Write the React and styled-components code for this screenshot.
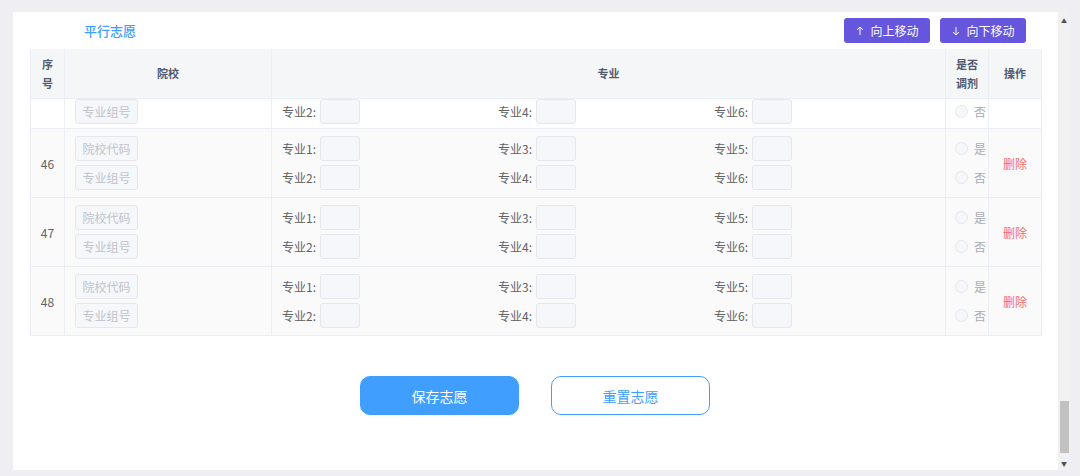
import React from 'react';
import styled, { createGlobalStyle } from 'styled-components';

const Global = createGlobalStyle`
  html, body { margin: 0; padding: 0; background: #efeef3; }
  body { font-family: "Noto Sans CJK SC", "Noto Sans", sans-serif; font-size: 12px; color: #606266; }
`;

const Page = styled.div`
  display: flex;
  height: 476px;
  padding: 12px 10px 6px 13px;
  box-sizing: border-box;
`;

const Panel = styled.div`
  flex: 1;
  background: #fff;
  padding: 0 16px 0 17px;
  display: flex;
  flex-direction: column;
`;

const Scrollbar = styled.div`
  width: 14px;
  background: #f1f1f1;
  display: flex;
  flex-direction: column;
  justify-content: space-between;
  align-items: center;
  padding: 4px 0 2px;
  box-sizing: border-box;
  font-size: 6px;
  color: #505050;
`;

const Thumb = styled.div`
  width: 9px;
  height: 52px;
  background: #c1c1c1;
  margin-top: auto;
  margin-bottom: 6px;
`;

const TopBar = styled.div`
  height: 37px;
  margin-left: 3px;
  display: flex;
  align-items: center;
  justify-content: space-between;
  padding: 0 16px 0 51px;
`;

const Title = styled.div`
  color: #409eff;
  font-size: 13px;
  font-weight: 500;
`;

const MoveButtons = styled.div`
  display: flex;
  gap: 10px;
`;

const MoveButton = styled.button`
  width: 86px;
  height: 25px;
  border: none;
  border-radius: 3px;
  background: #6655dd;
  color: #fff;
  font-family: inherit;
  font-size: 12px;
  display: flex;
  align-items: center;
  justify-content: center;
  gap: 5px;
`;

const Table = styled.div`
  display: grid;
  grid-template-columns: 34px 207px 674px 43px 53px;
  border-left: 1px solid #ebeef5;
`;

const HeadCell = styled.div`
  height: 50px;
  background: #f5f6f8;
  border-right: 1px solid #ebeef5;
  border-bottom: 1px solid #ebeef5;
  display: flex;
  align-items: center;
  justify-content: center;
  text-align: center;
  font-weight: 700;
  color: #515a6e;
  font-size: 11px;
  line-height: 19px;
  box-sizing: border-box;
`;

const Cell = styled.div`
  height: ${p => (p.$partial ? 30 : 69)}px;
  background: ${p => (p.$partial ? '#fff' : '#fafafa')};
  border-right: 1px solid #ebeef5;
  border-bottom: 1px solid #ebeef5;
  display: flex;
  flex-direction: column;
  justify-content: ${p => (p.$partial ? 'flex-start' : 'center')};
  align-items: ${p => p.$align || 'flex-start'};
  gap: 4px;
  padding: 0 ${p => p.$px || 0}px;
  box-sizing: border-box;
  overflow: hidden;
  color: #606266;
`;

const SmallInput = styled.div`
  width: 63px;
  height: 25px;
  box-sizing: border-box;
  border: 1px solid #e4e7ed;
  border-radius: 3px;
  background: #f5f7fa;
  color: #c0c4cc;
  display: flex;
  align-items: center;
  justify-content: center;
  font-size: 12px;
`;

const MajorGrid = styled.div`
  display: grid;
  grid-template-columns: repeat(3, 216px);
  row-gap: 4px;
`;

const Major = styled.div`
  display: flex;
  align-items: center;
  font-size: 12px;
  color: #606266;
`;

const Box = styled.div`
  width: 40px;
  height: 25px;
  box-sizing: border-box;
  border: 1px solid #e4e7ed;
  border-radius: 3px;
  background: #f5f7fa;
  margin-left: 4px;
`;

const Radio = styled.div`
  display: flex;
  align-items: center;
  gap: 6px;
  height: 25px;
  color: #a8abb2;
  &::before {
    content: '';
    width: 11px;
    height: 11px;
    border: 1px solid #e4e7ed;
    background: #f5f7fa;
    border-radius: 50%;
  }
`;

const Delete = styled.span`
  color: #f56c6c;
  font-size: 12px;
`;

const Footer = styled.div`
  display: flex;
  justify-content: center;
  gap: 32px;
  margin-top: 40px;
  padding-right: 2px;
`;

const BigButton = styled.button`
  width: 159px;
  height: 39px;
  border-radius: 10px;
  font-family: inherit;
  font-size: 14px;
  border: 1px solid #409eff;
  background: ${p => (p.$primary ? '#409eff' : '#fff')};
  color: ${p => (p.$primary ? '#fff' : '#409eff')};
`;

const Arrow = ({ down }) => (
  <svg width="10" height="10" viewBox="0 0 10 10" fill="none" stroke="#fff" strokeWidth="1">
    {down ? <path d="M5 1v8M2 6l3 3 3-3" /> : <path d="M5 9V1M2 4l3-3 3 3" />}
  </svg>
);

const rows = [46, 47, 48];

export default function App() {
  return (
    <>
      <Global />
      <Page>
        <Panel>
          <TopBar>
            <Title>平行志愿</Title>
            <MoveButtons>
              <MoveButton><Arrow />向上移动</MoveButton>
              <MoveButton><Arrow down />向下移动</MoveButton>
            </MoveButtons>
          </TopBar>
          <Table>
            <HeadCell>序<br />号</HeadCell>
            <HeadCell>院校</HeadCell>
            <HeadCell>专业</HeadCell>
            <HeadCell>是否<br />调剂</HeadCell>
            <HeadCell>操作</HeadCell>

            <Cell $partial />
            <Cell $partial $px={10}><SmallInput>专业组号</SmallInput></Cell>
            <Cell $partial $px={10}>
              <MajorGrid>
                <Major>专业2:<Box /></Major>
                <Major>专业4:<Box /></Major>
                <Major>专业6:<Box /></Major>
              </MajorGrid>
            </Cell>
            <Cell $partial $px={9}><Radio>否</Radio></Cell>
            <Cell $partial />

            {rows.map(n => (
              <React.Fragment key={n}>
                <Cell $align="center">{n}</Cell>
                <Cell $px={10}>
                  <SmallInput>院校代码</SmallInput>
                  <SmallInput>专业组号</SmallInput>
                </Cell>
                <Cell $px={10}>
                  <MajorGrid>
                    <Major>专业1:<Box /></Major>
                    <Major>专业3:<Box /></Major>
                    <Major>专业5:<Box /></Major>
                    <Major>专业2:<Box /></Major>
                    <Major>专业4:<Box /></Major>
                    <Major>专业6:<Box /></Major>
                  </MajorGrid>
                </Cell>
                <Cell $px={9}>
                  <Radio>是</Radio>
                  <Radio>否</Radio>
                </Cell>
                <Cell $align="center"><Delete>删除</Delete></Cell>
              </React.Fragment>
            ))}
          </Table>
          <Footer>
            <BigButton $primary>保存志愿</BigButton>
            <BigButton>重置志愿</BigButton>
          </Footer>
        </Panel>
        <Scrollbar>
          <span>▲</span>
          <Thumb />
          <span>▼</span>
        </Scrollbar>
      </Page>
    </>
  );
}
